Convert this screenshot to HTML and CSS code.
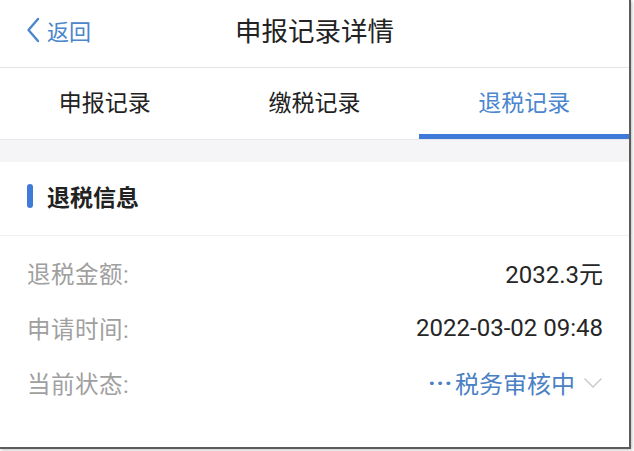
FILE: index.html
```html
<!DOCTYPE html>
<html lang="zh-CN">
<head>
<meta charset="utf-8">
<link rel="stylesheet" href="styles.css">
</head>
<body>
<div class="frame">
  <header class="topbar">
    <div class="back">
      <svg class="chev" width="14" height="26" viewBox="0 0 14 26"><path d="M12 2 L2.5 13 L12 24" fill="none" stroke="#4a86cc" stroke-width="2.4" stroke-linecap="round" stroke-linejoin="round"/></svg>
      <span>返回</span>
    </div>
    <div class="title">申报记录详情</div>
  </header>
  <nav class="tabs">
    <div class="tab">申报记录</div>
    <div class="tab">缴税记录</div>
    <div class="tab active">退税记录</div>
  </nav>
  <div class="gap"></div>
  <section class="section-head">
    <span class="bar"></span>
    <h2>退税信息</h2>
  </section>
  <div class="rows">
    <div class="row"><span class="label">退税金额:</span><span class="value">2032.3元</span></div>
    <div class="row"><span class="label">申请时间:</span><span class="value">2022-03-02 09:48</span></div>
    <div class="row"><span class="label">当前状态:</span><span class="value status"><span class="dots">···</span>税务审核中<svg class="down" width="20" height="12" viewBox="0 0 20 12"><path d="M1.5 1.5 L10 10 L18.5 1.5" fill="none" stroke="#c8c8cc" stroke-width="1.4"/></svg></span></div>
  </div>
</div>
</body>
</html>
```
FILE: styles.css
```css
html, body {
  margin: 0;
  padding: 0;
  background: #fff;
}
body {
  width: 634px;
  height: 451px;
  overflow: hidden;
  font-family: Roboto, "Noto Sans CJK SC", sans-serif;
}
.frame {
  width: 629px;
  height: 447px;
  background: #fff;
  border-right: 2px solid #5c5c5c;
  border-bottom: 2px solid #5c5c5c;
  box-shadow: 1px 1px 3px rgba(0,0,0,0.25);
  overflow: hidden;
}
.topbar {
  height: 68px;
  box-sizing: border-box;
  padding-bottom: 8px;
  border-bottom: 1px solid #e4e4e6;
  display: flex;
  align-items: center;
  position: relative;
}
.back {
  display: flex;
  align-items: center;
  gap: 7px;
  padding-left: 26px;
  color: #4a86cc;
  font-size: 22px;
}
.title {
  position: absolute;
  left: 0;
  right: 0;
  text-align: center;
  font-size: 26.5px;
  color: #222;
  pointer-events: none;
}
.tabs {
  height: 71px;
  display: flex;
  border-bottom: 1px solid #e8e8ea;
}
.tab {
  flex: 1;
  display: flex;
  align-items: center;
  justify-content: center;
  font-size: 23px;
  color: #222;
  box-sizing: border-box;
  padding-bottom: 6px;
}
.tab.active {
  color: #4b86cf;
  border-bottom: 5px solid #3f7ad8;
  padding-bottom: 1px;
}
.gap {
  height: 22px;
  background: #f5f5f7;
}
.section-head {
  height: 74px;
  box-sizing: border-box;
  padding-bottom: 6px;
  border-bottom: 1px solid #efeff1;
  display: flex;
  align-items: center;
  padding-left: 27px;
  gap: 14px;
}
.bar {
  width: 6px;
  height: 24px;
  border-radius: 3px;
  background: #3f7ad8;
}
.section-head h2 {
  margin: 0;
  font-size: 23px;
  font-weight: 700;
  color: #222;
}
.rows {
  padding: 9px 26px 0 27px;
}
.row {
  height: 55px;
  display: flex;
  align-items: center;
  justify-content: space-between;
}
.label {
  font-size: 23.5px;
  color: #a0a0a0;
  letter-spacing: 0.5px;
}
.value {
  font-size: 24px;
  color: #262626;
}
.status {
  color: #4a80c4;
  display: flex;
  align-items: center;
}
.dots {
  font-weight: 700;
  letter-spacing: 1px;
  margin-right: 2px;
}
.down {
  margin-left: 8px;
}
```
